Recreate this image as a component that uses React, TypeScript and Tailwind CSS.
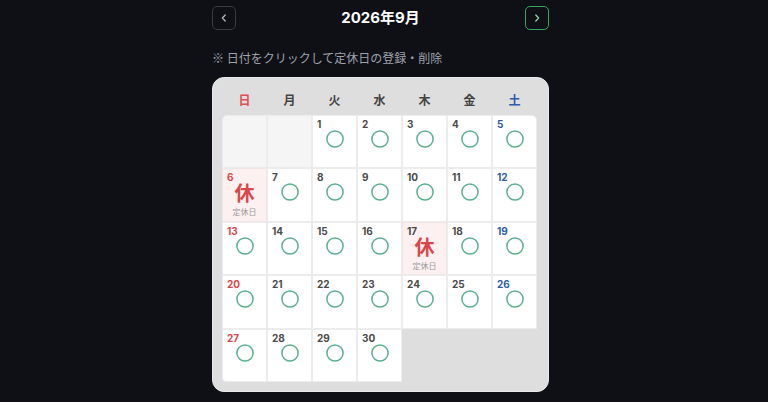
import React from "react";

const font = { fontFamily: 'Inter, "Noto Sans CJK JP", sans-serif' };
const jp = { fontFamily: '"Noto Sans CJK JP", sans-serif' };

type Cell = { day: number | null; holiday?: boolean };

function buildCells(): Cell[] {
  const cells: Cell[] = [{ day: null }, { day: null }];
  for (let d = 1; d <= 30; d++) cells.push({ day: d, holiday: d === 6 || d === 17 });
  return cells;
}

function Circle() {
  return (
    <svg width="18" height="18" viewBox="0 0 18 18" className="mx-auto">
      <circle cx="9" cy="9" r="8.1" fill="none" stroke="#5cb08e" strokeWidth="1.5" />
    </svg>
  );
}

export default function App() {
  const cells = buildCells();
  const weekdays = ["日", "月", "火", "水", "木", "金", "土"];
  return (
    <div className="min-h-[402px] w-full bg-[#0e1016]" style={font}>
      <div className="w-[761px] flex justify-center">
        <div className="w-[337px] flex flex-col">
          <div className="h-[36px] pt-[6px] flex items-start justify-between">
            <button className="w-[24px] h-[24px] rounded-[5px] border border-[#363a43] flex items-center justify-center">
              <svg width="10" height="10" viewBox="0 0 10 10">
                <path d="M6.2 2 L3.4 5 L6.2 8" fill="none" stroke="#b5b8bf" strokeWidth="1.3" strokeLinecap="round" strokeLinejoin="round" />
              </svg>
            </button>
            <div className="text-white font-bold text-[15px] leading-[24px]">2026年9月</div>
            <button className="w-[24px] h-[24px] rounded-[5px] border border-[#3aa45e] flex items-center justify-center">
              <svg width="10" height="10" viewBox="0 0 10 10">
                <path d="M3.8 2 L6.6 5 L3.8 8" fill="none" stroke="#8fd6a5" strokeWidth="1.3" strokeLinecap="round" strokeLinejoin="round" />
              </svg>
            </button>
          </div>
          <div className="mt-[13px] text-[12px] leading-[18px] text-[#9ea2ab]" style={jp}>
            ※ 日付をクリックして定休日の登録・削除
          </div>
          <div className="mt-[10px] rounded-[12px] bg-[#dedede] border border-[#e9e9e9] pl-[9px] pr-[11px] pt-[9px] pb-[9px]">
            <div className="grid grid-cols-7 h-[26px] items-center" style={jp}>
              {weekdays.map((w, i) => (
                <div
                  key={w}
                  className={`text-center text-[12px] font-bold ${i === 0 ? "text-[#e04f52]" : i === 6 ? "text-[#2f5ba8]" : "text-[#444]"}`}
                >
                  {w}
                </div>
              ))}
            </div>
            <div className="mt-[2px] grid grid-cols-7 auto-rows-[53.4px]">
              {cells.map((c, i) => {
                const col = i % 7;
                const color = col === 0 ? "text-[#d9474b]" : col === 6 ? "text-[#2f5ba8]" : "text-[#4a4a4a]";
                const corner =
                  i === 0 ? "rounded-tl-[5px]" : i === 6 ? "rounded-tr-[5px]" : i === 28 ? "rounded-bl-[4px]" : "";
                if (c.day === null) {
                  return <div key={i} className={`bg-[#f5f5f5] border border-[#ececec] ${corner}`} />;
                }
                if (c.holiday) {
                  return (
                    <div key={i} className={`bg-[#fdf0f0] border border-[#efe6e6] flex flex-col ${corner}`}>
                      <div className={`pl-[4px] pt-[2px] h-[14px] text-[10px] leading-[12px] font-bold ${color}`}>{c.day}</div>
                      <div className="text-center text-[20px] leading-[20px] font-bold text-[#d9474b]" style={jp}>休</div>
                      <div className="mt-[4px] text-center text-[8px] leading-[10px] text-[#9a9a9a]" style={jp}>定休日</div>
                    </div>
                  );
                }
                return (
                  <div key={i} className={`bg-white border border-[#ececec] flex flex-col ${corner}`}>
                    <div className={`pl-[4px] pt-[2px] h-[14px] text-[10px] leading-[12px] font-bold ${color}`}>{c.day}</div>
                    <Circle />
                  </div>
                );
              })}
            </div>
          </div>
        </div>
      </div>
    </div>
  );
}
